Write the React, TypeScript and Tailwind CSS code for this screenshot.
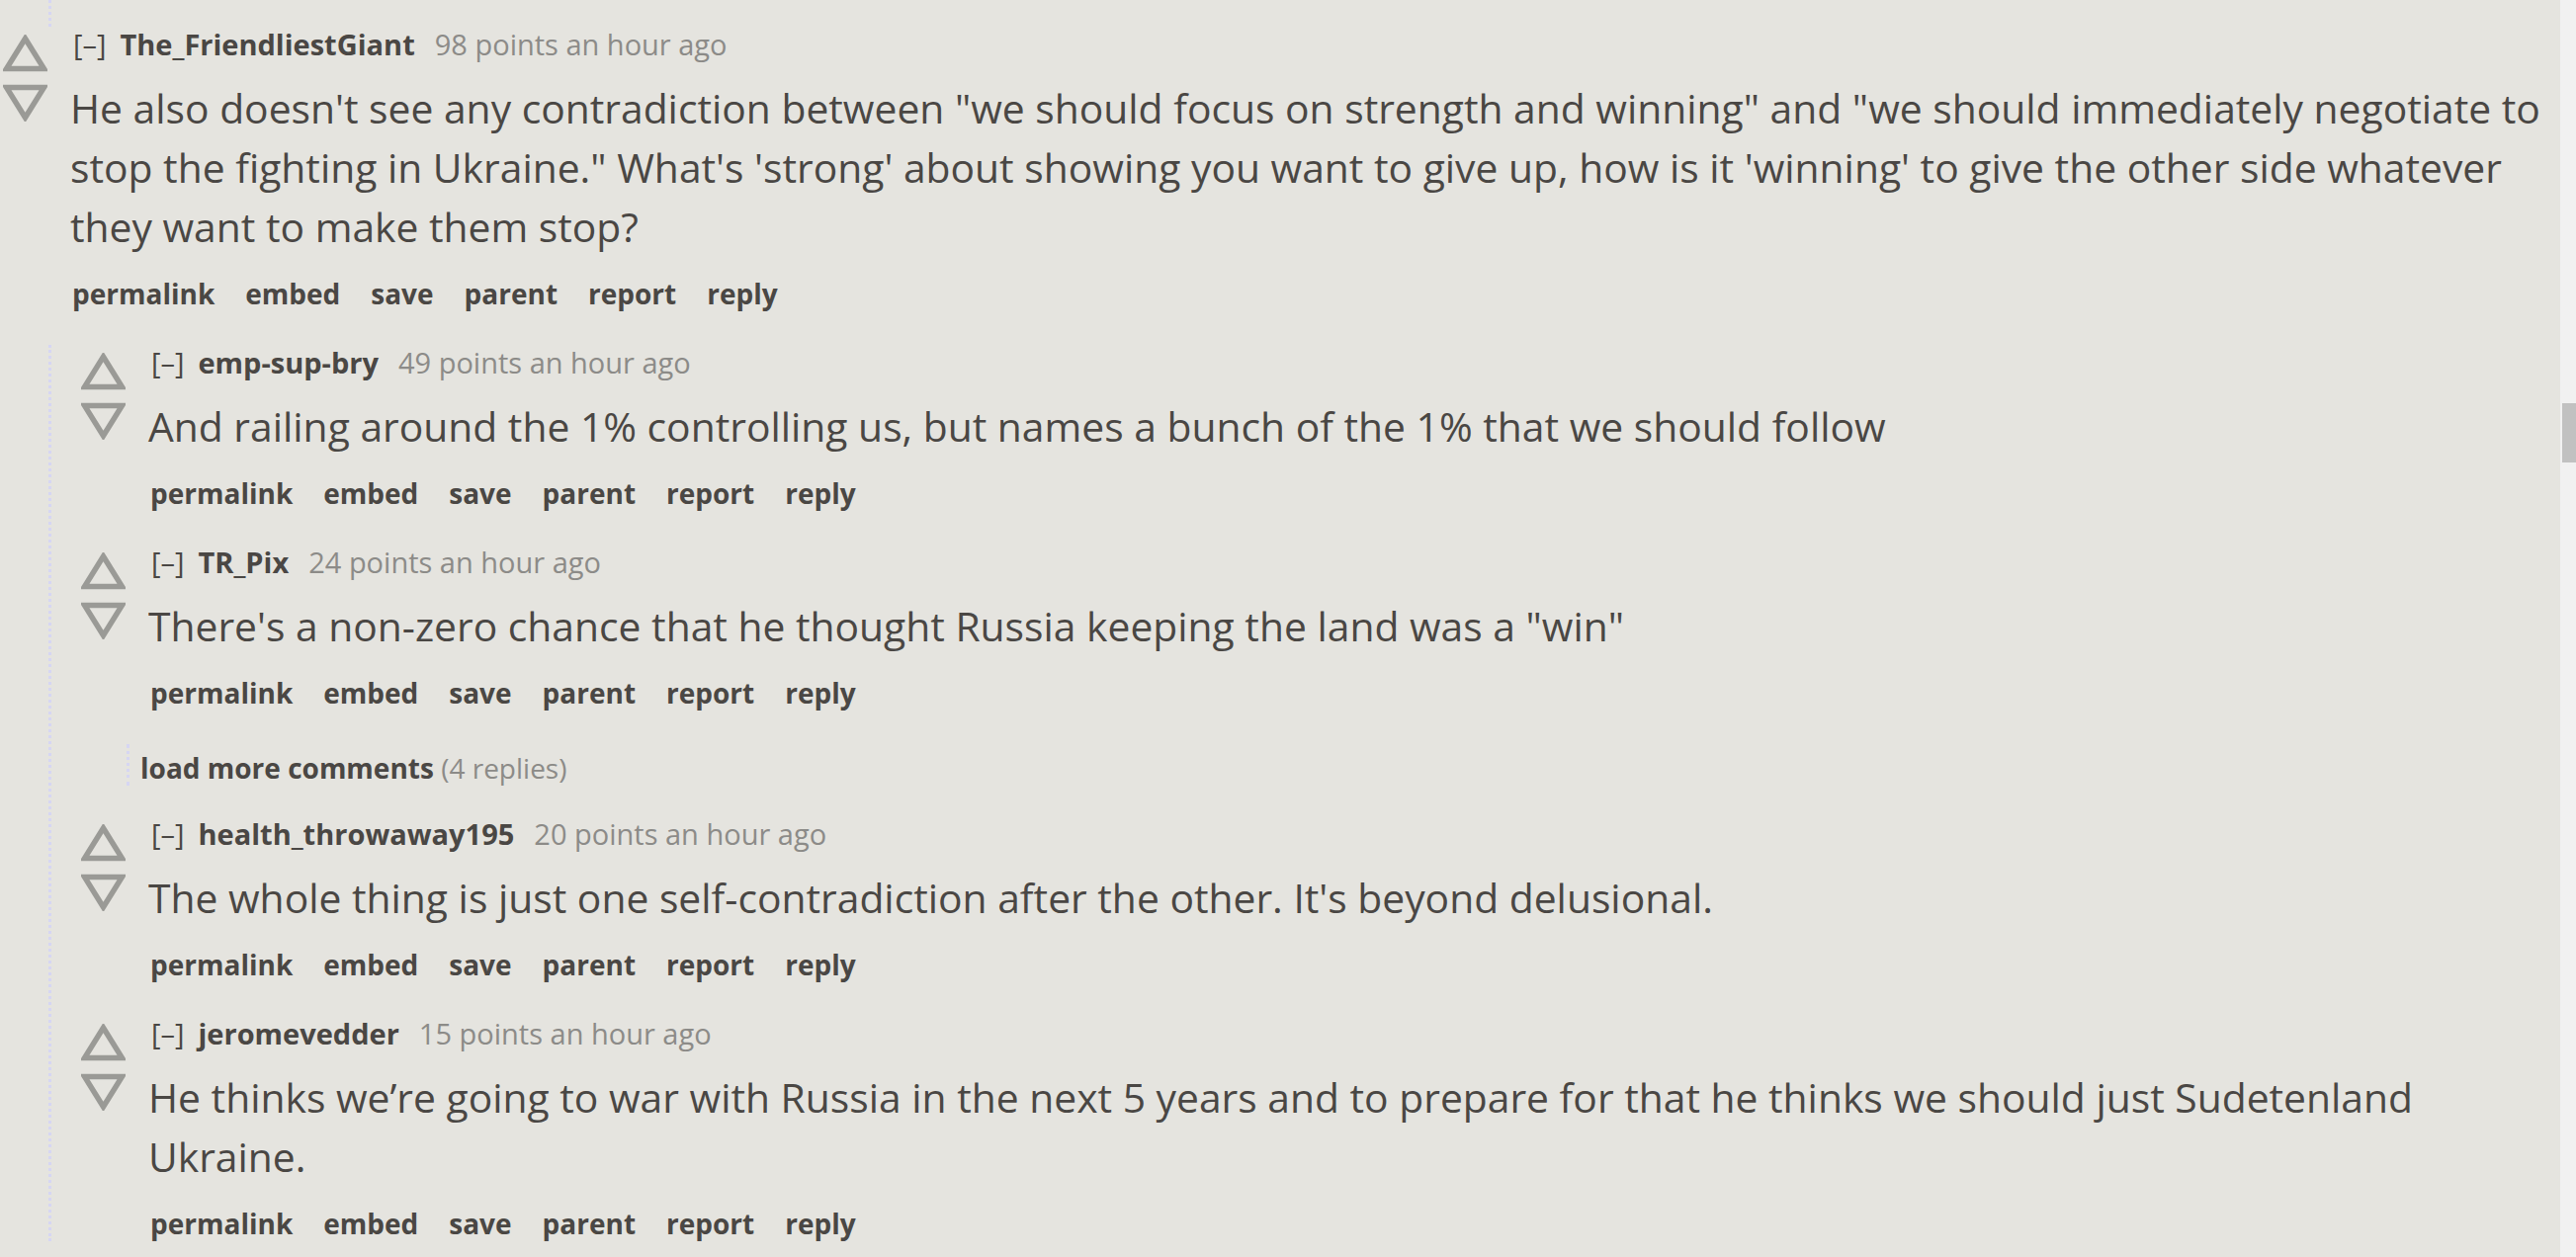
import React from "react";

const FONT = { fontFamily: "'Open Sans', 'Noto Sans', sans-serif" };

function UpArrow() {
  return (
    <svg width="45" height="38" viewBox="0 0 45 38" className="block blur-[0.4px]">
      <polygon points="22.5,4 41.5,34.5 3.5,34.5" fill="none" stroke="#9a9a96" strokeWidth="5.5" strokeLinejoin="miter" />
    </svg>
  );
}

function DownArrow() {
  return (
    <svg width="45" height="38" viewBox="0 0 45 38" className="block blur-[0.4px]">
      <polygon points="3.5,3.5 41.5,3.5 22.5,34" fill="none" stroke="#9a9a96" strokeWidth="5.5" strokeLinejoin="miter" />
    </svg>
  );
}

type CommentProps = {
  user: string;
  points: string;
  lines: string[];
  children?: React.ReactNode;
};

function Buttons() {
  const items = ["permalink", "embed", "save", "parent", "report", "reply"];
  return (
    <ul className="mt-[20px] flex gap-[31px] pl-[2px] text-[28px] font-bold leading-[36px] text-[#4a4744]">
      {items.map((i) => (
        <li key={i}>{i}</li>
      ))}
    </ul>
  );
}

function Comment({ user, points, lines, children }: CommentProps) {
  return (
    <div>
      <div className="mb-[34px] flex">
        <div className="mt-[8px] flex w-[45px] shrink-0 flex-col gap-[12px]">
          <UpArrow />
          <DownArrow />
        </div>
        <div className="ml-[23px] min-w-0">
          <div className="flex items-baseline whitespace-nowrap pl-[3px] text-[29px] leading-[36px]">
            <span className="text-[#4a4744]">[–]</span>
            <span className="ml-[14px] font-bold text-[#4a4744]">{user}</span>
            <span className="ml-[20px] text-[#8c8b88]">{points} points an hour ago</span>
          </div>
          <div className="mt-[16px] text-[40.8px] leading-[60px] text-[#4a4744]">
            {lines.map((l, idx) => (
              <div key={idx} className="whitespace-nowrap">
                {l}
              </div>
            ))}
          </div>
          <Buttons />
        </div>
      </div>
      {children}
    </div>
  );
}

function Children({ children }: { children: React.ReactNode }) {
  return (
    <div className="ml-[46px] border-l-[3px] border-dotted border-[#d6d6f3] pl-[30px]">
      {children}
    </div>
  );
}

export default function App() {
  return (
    <div className="flex h-[1272px] w-full overflow-hidden bg-[#e5e4df]" style={FONT}>
      <main className="min-w-0 flex-1 pl-[3px]">
        <div className="ml-[46px] h-[27px] border-l-[3px] border-dotted border-[#d6d6f3]" />
        <Comment
          user="The_FriendliestGiant"
          points="98"
          lines={[
            'He also doesn\'t see any contradiction between "we should focus on strength and winning" and "we should immediately negotiate to',
            'stop the fighting in Ukraine." What\'s \'strong\' about showing you want to give up, how is it \'winning\' to give the other side whatever',
            "they want to make them stop?",
          ]}
        >
          <Children>
            <Comment
              user="emp-sup-bry"
              points="49"
              lines={["And railing around the 1% controlling us, but names a bunch of the 1% that we should follow"]}
            />
            <Comment
              user="TR_Pix"
              points="24"
              lines={['There\'s a non-zero chance that he thought Russia keeping the land was a "win"']}
            >
              <div className="mb-[31px] ml-[46px] h-[42px] border-l-[3px] border-dotted border-[#d6d6f3] pl-[11px] pt-[6px]">
                <div className="whitespace-nowrap text-[28px] leading-[36px]">
                  <span className="font-bold text-[#4a4744]">load more comments</span>
                  <span className="text-[#8c8b88]"> (4 replies)</span>
                </div>
              </div>
            </Comment>
            <Comment
              user="health_throwaway195"
              points="20"
              lines={["The whole thing is just one self-contradiction after the other. It's beyond delusional."]}
            />
            <Comment
              user="jeromevedder"
              points="15"
              lines={[
                "He thinks we’re going to war with Russia in the next 5 years and to prepare for that he thinks we should just Sudetenland",
                "Ukraine.",
              ]}
            />
          </Children>
        </Comment>
      </main>
      <aside className="h-full w-[16px] shrink-0 bg-[#f1f1f1]">
        <div className="ml-[2px] mt-[408px] h-[60px] w-[14px] bg-[#c1c1c1]" />
      </aside>
    </div>
  );
}
